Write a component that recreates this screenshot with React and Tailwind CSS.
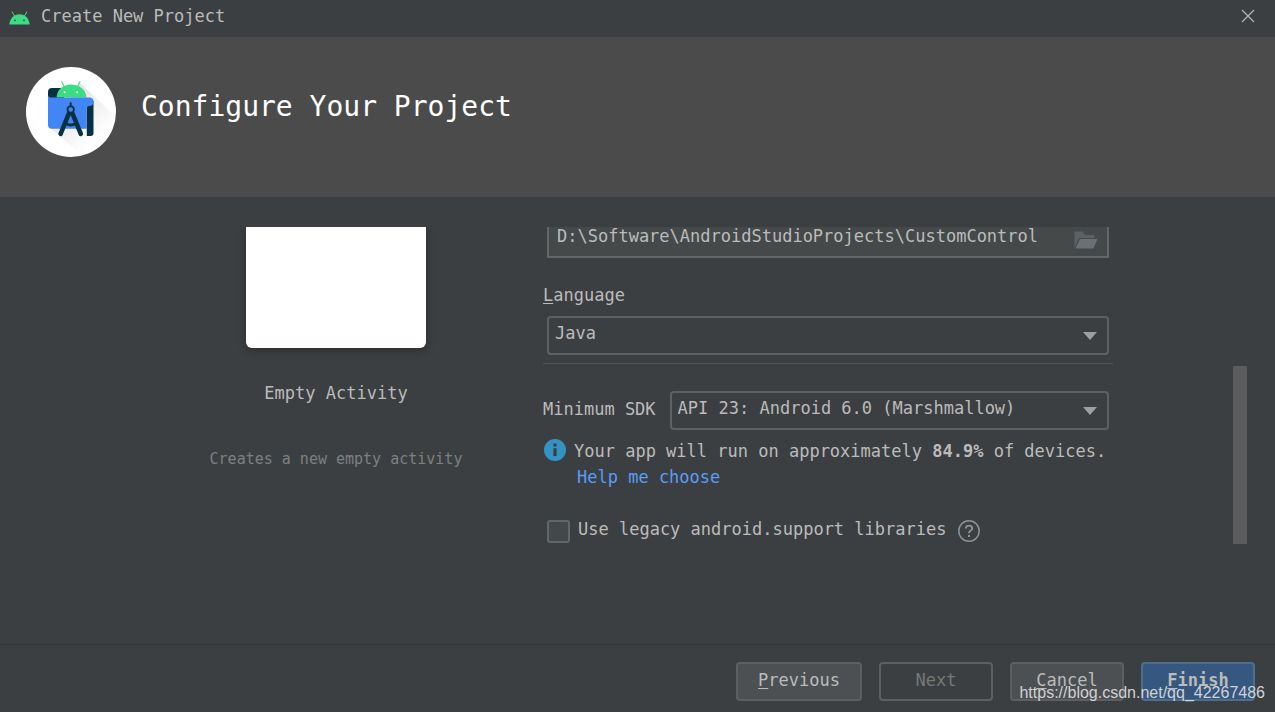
import { useState } from "react";

const AndroidHead = () => (
    <svg width="21" height="14" viewBox="0 0 21 14" fill="none" aria-hidden="true">
        <path d="M0.3 13.6C0.7 7.4 5 3.2 10.5 3.2S20.3 7.4 20.7 13.6Z" fill="#3ddc84"/>
        <path d="M3.2 0.9L5.4 4.8M17.8 0.9L15.6 4.8" stroke="#3ddc84" strokeWidth="1" strokeLinecap="round"/>
        <circle cx="6" cy="9.4" r="0.8" fill="#3c3f41"/>
        <circle cx="15" cy="9.4" r="0.8" fill="#3c3f41"/>
    </svg>
);

const StudioLogo = () => (
    <svg width="90" height="90" viewBox="0 0 90 90" fill="none" aria-hidden="true">
        <defs>
            <linearGradient id="shade" x1="40" y1="30" x2="72" y2="68" gradientUnits="userSpaceOnUse">
                <stop offset="0" stopColor="#d8d8d8"/>
                <stop offset="1" stopColor="#fdfdfd"/>
            </linearGradient>
        </defs>
        <circle cx="45" cy="45" r="45" fill="#fff"/>
        <path d="M54 16L89 49A45 45 0 0 1 56 88L24 61Z" fill="url(#shade)" opacity="0.75"/>
        <path d="M26 21H38V34H22V25A4 4 0 0 1 26 21Z" fill="#073042"/>
        <path d="M30.5 30.5C31 22.5 37 17.5 45 17.5S60 22.5 60.5 30.5Z" fill="#3ddc84"/>
        <path d="M35.8 14.8L38.4 20M53.9 14.8L51.3 20" stroke="#3ddc84" strokeWidth="1.1" strokeLinecap="round"/>
        <circle cx="38.6" cy="25.2" r="1" fill="#fff"/>
        <circle cx="51.2" cy="25.2" r="1" fill="#fff"/>
        <path d="M60.8 34H67.5V66A3 3 0 0 1 64.5 69H60.8Z" fill="#073042"/>
        <path d="M22 27.5A3 3 0 0 0 25 30.5H64A4 4 0 0 1 67.5 34.5C67.5 37.5 66 39 63.5 39C61.8 39 60.8 40 60.8 41.5V61.8H26A4 4 0 0 1 22 57.8Z" fill="#4285f4"/>
        <path d="M43.3 45.5L34.6 66.8M46.1 45.5L54.8 66.8" stroke="#073042" strokeWidth="4.6" strokeLinecap="round"/>
        <path d="M39.5 56.5Q44.7 59.5 49.9 56.5" stroke="#073042" strokeWidth="3"/>
        <circle cx="44.7" cy="42.4" r="3.2" fill="#4285f4" stroke="#073042" strokeWidth="1.9"/>
        <path d="M44.7 36.2V38.6" stroke="#073042" strokeWidth="2" strokeLinecap="round"/>
    </svg>
);

const FolderIcon = () => (
    <svg width="24" height="18" viewBox="0 0 24 18" aria-hidden="true">
        <path d="M0.5 17V0.5H8.5L11 4H20.5V7H5.2Z" fill="#5b6164"/>
        <path d="M6 8H23.5L19.3 17.5H1.3Z" fill="#6a7073"/>
    </svg>
);

const InfoIcon = () => (
    <svg width="22" height="22" viewBox="0 0 22 22" aria-hidden="true">
        <circle cx="11" cy="11" r="11" fill="#3592c4"/>
        <path d="M9.4 4.6H12.6V7.4H9.4ZM9.4 9.2H12.6V17H9.4Z" fill="#3c3f41"/>
    </svg>
);

const HelpIcon = () => (
    <svg width="22" height="22" viewBox="0 0 22 22" fill="none" stroke="#8f9295" aria-hidden="true">
        <circle cx="11" cy="11" r="10.2" strokeWidth="1.5"/>
        <path d="M7.8 8.6C7.8 6.7 9.1 5.6 11 5.6S14.2 6.7 14.2 8.4C14.2 10.6 11 10.6 11 13.2" strokeWidth="1.9"/>
        <path d="M11 14.9V17" strokeWidth="2"/>
    </svg>
);

const CloseIcon = () => (
    <svg width="14" height="14" viewBox="0 0 14 14" stroke="#b4b6b8" strokeWidth="1.2" aria-hidden="true"><path d="M1 1L13 13M13 1L1 13"/></svg>
);

function Dropdown({ id, value, onChange, options }) {
    return (
        <div className="relative w-full">
            <select
                id={id}
                value={value}
                onChange={onChange}
                className="block h-[39px] w-full appearance-none rounded border-2 border-[#5e6162] bg-[#3c3f41] pr-10 pb-1.5 pl-1.5 text-[#bbbbbb]"
            >
                {options.map((option) => (
                    <option key={option}>{option}</option>
                ))}
            </select>
            <svg className="pointer-events-none absolute top-4 right-3" width="14" height="8" viewBox="0 0 14 8" aria-hidden="true"><path d="M0 0H14L7 8Z" fill="#9da0a2"/></svg>
        </div>
    );
}

export default function App() {
    const [location, setLocation] = useState("D:\\Software\\AndroidStudioProjects\\CustomControl");
    const [language, setLanguage] = useState("Java");
    const [sdk, setSdk] = useState("API 23: Android 6.0 (Marshmallow)");
    const [legacy, setLegacy] = useState(false);

    return (
        <div className="relative flex min-h-screen flex-col bg-[#3c3f41] font-['DejaVu_Sans_Mono',monospace] text-[17px] leading-[26px] text-[#bbbbbb]">
            <div className="flex h-[37px] items-center justify-between pr-5 pb-1.5 pl-[9px]">
                <div className="flex items-end gap-[11px]">
                    <div className="pb-1"><AndroidHead /></div>
                    <span>Create New Project</span>
                </div>
                <button aria-label="Close"><CloseIcon /></button>
            </div>

            <header className="flex h-40 items-start gap-[25px] bg-[#4b4b4b] px-[26px] pt-[30px] text-white">
                <StudioLogo />
                <h1 className="pt-[18px] text-[28px] leading-[44px]">Configure Your Project</h1>
            </header>

            <main className="flex grow pt-[30px] pr-7">
                <section className="flex w-[543px] shrink-0 flex-col items-center overflow-hidden pl-[129px]">
                    <div className="h-[121px] w-[180px] rounded-b-md bg-white shadow-[0_2px_8px_rgba(0,0,0,0.3)]"></div>
                    <h2 className="mt-8">Empty Activity</h2>
                    <p className="mt-10 text-[15px] text-[#7d8082]">Creates a new empty activity</p>
                </section>

                <form className="mr-[120px] grow overflow-hidden" onSubmit={(e) => e.preventDefault()}>
                    <div className="relative -mt-2 pr-1 pl-1">
                        <input
                            aria-label="Save location"
                            value={location}
                            onChange={(e) => setLocation(e.target.value)}
                            className="block h-[39px] w-full border-2 border-[#646565] bg-[#45494a] pr-12 pb-1.5 pl-2"
                        />
                        <button type="button" aria-label="Browse" className="absolute top-3 right-[15px]"><FolderIcon /></button>
                    </div>

                    <div className="border-b border-[#515456] pt-6 pb-2">
                        <label htmlFor="language"><span className="underline underline-offset-2">L</span>anguage</label>
                        <div className="mt-2 px-1">
                            <Dropdown id="language" value={language} onChange={(e) => setLanguage(e.target.value)} options={["Java", "Kotlin"]} />
                        </div>
                    </div>

                    <div className="mt-[27px] flex items-center gap-3.5 pr-1">
                        <label htmlFor="sdk" className="shrink-0 pb-1">Minimum SDK</label>
                        <Dropdown id="sdk" value={sdk} onChange={(e) => setSdk(e.target.value)} options={["API 23: Android 6.0 (Marshmallow)", "API 24: Android 7.0 (Nougat)"]} />
                    </div>

                    <div className="mt-2 flex items-start gap-2 whitespace-nowrap">
                        <div className="pt-px pl-px"><InfoIcon /></div>
                        <div>
                            <p>Your app will run on approximately <b>84.9%</b> of devices.</p>
                            <a href="#help" className="pl-[3px] text-[#589df6]">Help me choose</a>
                        </div>
                    </div>

                    <div className="mt-[26px] flex items-center gap-2 pl-1">
                        <input
                            id="legacy"
                            type="checkbox"
                            checked={legacy}
                            onChange={(e) => setLegacy(e.target.checked)}
                            className="size-[23px] appearance-none rounded-[3px] border-2 border-[#646768] bg-[#43494a] checked:bg-[#365880]"
                        />
                        <label htmlFor="legacy" className="pb-1">Use legacy android.support libraries</label>
                        <button type="button" aria-label="Help" className="ml-1"><HelpIcon /></button>
                    </div>
                </form>

                <div className="mt-[139px] h-[178px] w-[14px] shrink-0 bg-[#5b5c5d]"></div>
            </main>

            <footer className="flex h-[68px] justify-end gap-[17px] border-t border-[#323435] pt-[17px] pr-5">
                <button className="h-[39px] w-[126px] rounded border-2 border-[#5e6060] bg-[#4c5052] pb-1"><span className="underline underline-offset-2">P</span>revious</button>
                <button disabled className="h-[39px] w-[114px] rounded border-2 border-[#5e6060] pb-1 text-[#777777]">Next</button>
                <button className="h-[39px] w-[114px] rounded border-2 border-[#5e6060] bg-[#4c5052] pb-1"><span className="underline underline-offset-2">C</span>ancel</button>
                <button className="h-[39px] w-[114px] rounded border-2 border-[#4c708c] bg-[#365880] pb-1 font-bold"><span className="underline underline-offset-2">F</span>inish</button>
            </footer>

            <span className="pointer-events-none absolute right-[10px] bottom-2 font-['Liberation_Sans',sans-serif] text-[16px] leading-[22px] text-[#d0d2d3]">https://blog.csdn.net/qq_42267486</span>
        </div>
    );
}
